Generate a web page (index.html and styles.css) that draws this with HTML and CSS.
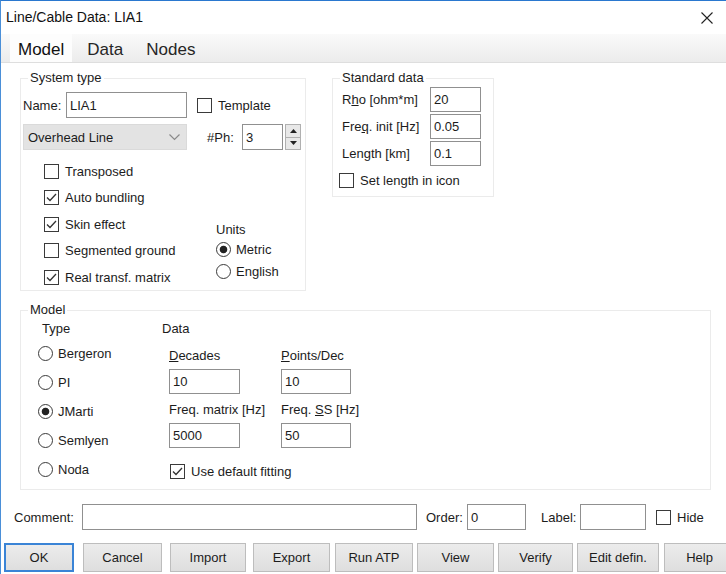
FILE: index.html
```html
<!DOCTYPE html>
<html>
<head>
<meta charset="utf-8">
<link rel="stylesheet" href="styles.css">
</head>
<body>
<div class="win">
  <div class="titlebar">
    <span class="title">Line/Cable Data: LIA1</span>
    <svg class="close" width="12" height="12" viewBox="0 0 12 12"><path d="M0.5 0.5L11.5 11.5M11.5 0.5L0.5 11.5" stroke="#222" stroke-width="1.1" fill="none"/></svg>
  </div>
  <div class="tabs">
    <div class="tab sel">Model</div>
    <div class="tab">Data</div>
    <div class="tab">Nodes</div>
  </div>
  <div class="page">
    <div class="toprow">
      <div class="group sys">
        <span class="legend">System type</span>
        <div class="row r1">
          <span class="lbl-name">Name:</span>
          <div class="input w-name">LIA1</div>
          <div class="chk tmpl"><span class="box"></span>Template</div>
        </div>
        <div class="row r2">
          <div class="combo"><span>Overhead Line</span><svg width="11" height="7" viewBox="0 0 11 7"><path d="M0.5 0.5L5.5 5.5L10.5 0.5" stroke="#8a8a8a" stroke-width="1.2" fill="none"/></svg></div>
          <span class="lbl-ph">#Ph:</span>
          <div class="input w-ph">3</div>
          <div class="spin">
            <span class="sbtn"><svg width="7" height="4" viewBox="0 0 7 4"><path d="M0 4L3.5 0L7 4Z" fill="#222"/></svg></span>
            <span class="sbtn"><svg width="7" height="4" viewBox="0 0 7 4"><path d="M0 0L3.5 4L7 0Z" fill="#222"/></svg></span>
          </div>
        </div>
        <div class="lower">
          <div class="checks">
            <div class="chk"><span class="box"></span>Transposed</div>
            <div class="chk"><span class="box"><svg width="13" height="13" viewBox="0 0 13 13"><path d="M2 6.5L5 9.5L11 3" stroke="#333" stroke-width="1.3" fill="none"/></svg></span>Auto bundling</div>
            <div class="chk"><span class="box"><svg width="13" height="13" viewBox="0 0 13 13"><path d="M2 6.5L5 9.5L11 3" stroke="#333" stroke-width="1.3" fill="none"/></svg></span>Skin effect</div>
            <div class="chk"><span class="box"></span>Segmented ground</div>
            <div class="chk"><span class="box"><svg width="13" height="13" viewBox="0 0 13 13"><path d="M2 6.5L5 9.5L11 3" stroke="#333" stroke-width="1.3" fill="none"/></svg></span>Real transf. matrix</div>
          </div>
          <div class="units">
            <div class="ulabel">Units</div>
            <div class="rad"><span class="circ on"></span>Metric</div>
            <div class="rad"><span class="circ"></span>English</div>
          </div>
        </div>
      </div>
      <div class="group std">
        <span class="legend">Standard data</span>
        <div class="srow"><span class="slbl">R<u>h</u>o [ohm*m]</span><div class="input w-std">20</div></div>
        <div class="srow"><span class="slbl">Fre<u>q</u>. init [Hz]</span><div class="input w-std">0.05</div></div>
        <div class="srow"><span class="slbl">Length [km]</span><div class="input w-std">0.1</div></div>
        <div class="chk setlen"><span class="box"></span>Set length in icon</div>
      </div>
    </div>
    <div class="group model">
      <span class="legend">Model</span>
      <div class="mbody">
        <div class="typecol">
          <div class="sublabel tlabel">Type</div>
          <div class="radios">
            <div class="rad mrad"><span class="circ"></span>Bergeron</div>
            <div class="rad mrad"><span class="circ"></span>PI</div>
            <div class="rad mrad"><span class="circ on"></span>JMarti</div>
            <div class="rad mrad"><span class="circ"></span>Semlyen</div>
            <div class="rad mrad"><span class="circ"></span>Noda</div>
          </div>
        </div>
        <div class="datacol">
          <div class="sublabel">Data</div>
          <div class="dgrid">
            <div class="dcell c1"><span><u>D</u>ecades</span><div class="input w-d1">10</div></div>
            <div class="dcell c1"><span><u>P</u>oints/Dec</span><div class="input w-d2">10</div></div>
            <div class="dcell c2"><span>Freq. matrix [Hz]</span><div class="input w-d1">5000</div></div>
            <div class="dcell c2"><span>Freq. <u>S</u>S [Hz]</span><div class="input w-d2">50</div></div>
          </div>
          <div class="chk fit"><span class="box"><svg width="13" height="13" viewBox="0 0 13 13"><path d="M2 6.5L5 9.5L11 3" stroke="#333" stroke-width="1.3" fill="none"/></svg></span>Use default fitting</div>
        </div>
      </div>
    </div>
  </div>
  <div class="crow">
    <span class="l-comment">Comment:</span>
    <div class="input w-comment"></div>
    <span class="l-order">Order:</span>
    <div class="input w-order">0</div>
    <span class="l-label">Label:</span>
    <div class="input w-label"></div>
    <div class="chk hide"><span class="box"></span>Hide</div>
  </div>
  <div class="buttons">
    <div class="btn ok">OK</div>
    <div class="btn">Cancel</div>
    <div class="btn">Import</div>
    <div class="btn">Export</div>
    <div class="btn">Run ATP</div>
    <div class="btn">View</div>
    <div class="btn">Verify</div>
    <div class="btn">Edit defin.</div>
    <div class="btn">Help</div>
  </div>
</div>
</body>
</html>
```
FILE: styles.css
```css
* { box-sizing: border-box; }
body {
  margin: 0;
  font: 13px/15px "Liberation Sans", Arial, sans-serif;
  color: #1c1c1c;
  background: #fff;
}
.win {
  width: 726px;
  height: 574px;
  border-top: 1px solid #2a78cf;
  border-left: 1px solid #4a8fd8;
  overflow: hidden;
  background: #fff;
}
.titlebar {
  height: 33px;
  display: flex;
  align-items: center;
  justify-content: space-between;
  padding: 0 13px 0 5px;
  font-size: 14px;
  color: #111;
}
.tabs {
  height: 29px;
  display: flex;
  gap: 7px;
  padding-left: 9px;
  background: linear-gradient(#fafafa, #ececec);
  border-bottom: 1px solid #dedede;
  font-size: 17px;
  line-height: 20px;
}
.tab {
  padding: 3px 8px 0;
  display: flex;
  align-items: center;
  color: #262626;
}
.tab.sel {
  background: #fdfdfd;
  color: #111;
}
.page {
  padding: 15px 0 0 19px;
}
.toprow {
  display: flex;
  align-items: flex-start;
}
.group {
  border: 1px solid #ebebeb;
}
.legend {
  display: block;
  width: fit-content;
  margin: -9px 0 0 7px;
  padding: 0 2px;
  background: #fff;
}
.sys {
  width: 286px;
  height: 213px;
}
.row {
  display: flex;
  align-items: center;
  height: 26px;
  padding-left: 2px;
}
.r1 { margin-top: 7px; }
.r2 { margin-top: 6px; }
.lbl-name { width: 43px; }
.input {
  height: 26px;
  border: 1px solid #909090;
  background: #fff;
  padding-left: 3px;
  display: flex;
  align-items: center;
}
.w-name { width: 121px; }
.w-ph { width: 41px; }
.chk {
  display: flex;
  align-items: center;
}
.box {
  width: 15px;
  height: 15px;
  border: 1px solid #3a3a3a;
  background: #fff;
  margin-right: 6px;
  display: flex;
  align-items: center;
  justify-content: center;
  flex: none;
}
.tmpl { margin-left: 10px; }
.combo {
  width: 164px;
  height: 26px;
  background: #e3e3e3;
  border: 1px solid #dadada;
  display: flex;
  align-items: center;
  justify-content: space-between;
  padding: 0 6px 0 4px;
}
.lbl-ph {
  margin-left: 20px;
  width: 35px;
}
.spin {
  width: 16px;
  height: 26px;
  margin-left: 2px;
  display: flex;
  flex-direction: column;
}
.sbtn {
  flex: 1;
  background: #e8e8e8;
  border: 1px solid #b0b0b0;
  display: flex;
  align-items: center;
  justify-content: center;
}
.sbtn + .sbtn { border-top: none; }
.lower {
  display: flex;
  margin-top: 8px;
}
.checks {
  margin-left: 23px;
  width: 172px;
}
.checks .chk { height: 26.5px; }
.units { margin-top: 64px; }
.ulabel { height: 15px; }
.rad {
  display: flex;
  align-items: center;
  height: 22px;
}
.units .ulabel + .rad { margin-top: 1px; }
.circ {
  width: 15px;
  height: 15px;
  border: 1px solid #3a3a3a;
  border-radius: 50%;
  background: #fff;
  margin-right: 5px;
  flex: none;
}
.circ.on {
  background: radial-gradient(circle, #222 0 3.4px, #fff 4.2px);
}
.std {
  margin-left: 26px;
  width: 162px;
  height: 119px;
}
.srow {
  display: flex;
  align-items: center;
  height: 25px;
  margin-top: 2px;
}
.slbl {
  padding-left: 9px;
  width: 97px;
}
.w-std { width: 51px; height: 25px; }
.setlen {
  margin: 7px 0 0 6px;
}
.model {
  margin-top: 19px;
  width: 691px;
  height: 180px;
}
.mbody { display: flex; }
.typecol {
  margin-left: 17px;
  width: 124px;
}
.sublabel {
  margin-top: 4px;
  height: 15px;
}
.tlabel { padding-left: 4px; }
.radios { margin-top: 3px; }
.mrad { height: 29px; }
.dgrid {
  margin-left: 7px;
  display: grid;
  grid-template-columns: 112px auto;
}
.dcell {
  display: flex;
  flex-direction: column;
  align-items: flex-start;
}
.dcell .input { margin-top: 6px; height: 25px; }
.c1 { margin-top: 12px; }
.c2 { margin-top: 8px; }
.w-d1 { width: 71px; }
.w-d2 { width: 70px; }
.fit {
  margin: 16px 0 0 8px;
}
.crow {
  display: flex;
  align-items: center;
  height: 26px;
  margin-top: 14px;
  padding-left: 13px;
}
.l-comment { width: 68px; }
.w-comment { width: 335px; }
.l-order { margin-left: 9px; width: 41px; }
.w-order { width: 59px; }
.l-label { margin-left: 15px; width: 39px; }
.w-label { width: 66px; }
.hide { margin-left: 10px; }
.buttons {
  display: flex;
  height: 29px;
  margin-top: 13px;
  padding-left: 3px;
}
.btn {
  height: 29px;
  background: linear-gradient(#ececec, #dedede);
  border: 1px solid #bdbdbd;
  display: flex;
  align-items: center;
  justify-content: center;
  flex: none;
}
.btn.ok { border: 2px solid #3a84d6; }
.btn:nth-child(1) { width: 70px; }
.btn:nth-child(2) { width: 79px; margin-left: 9px; }
.btn:nth-child(3) { width: 76px; margin-left: 8px; }
.btn:nth-child(4) { width: 77px; margin-left: 7px; }
.btn:nth-child(5) { width: 78px; margin-left: 5px; }
.btn:nth-child(6) { width: 77px; margin-left: 4px; }
.btn:nth-child(7) { width: 75px; margin-left: 4px; }
.btn:nth-child(8) { width: 82px; margin-left: 4px; }
.btn:nth-child(9) { width: 71px; margin-left: 5px; }
```
